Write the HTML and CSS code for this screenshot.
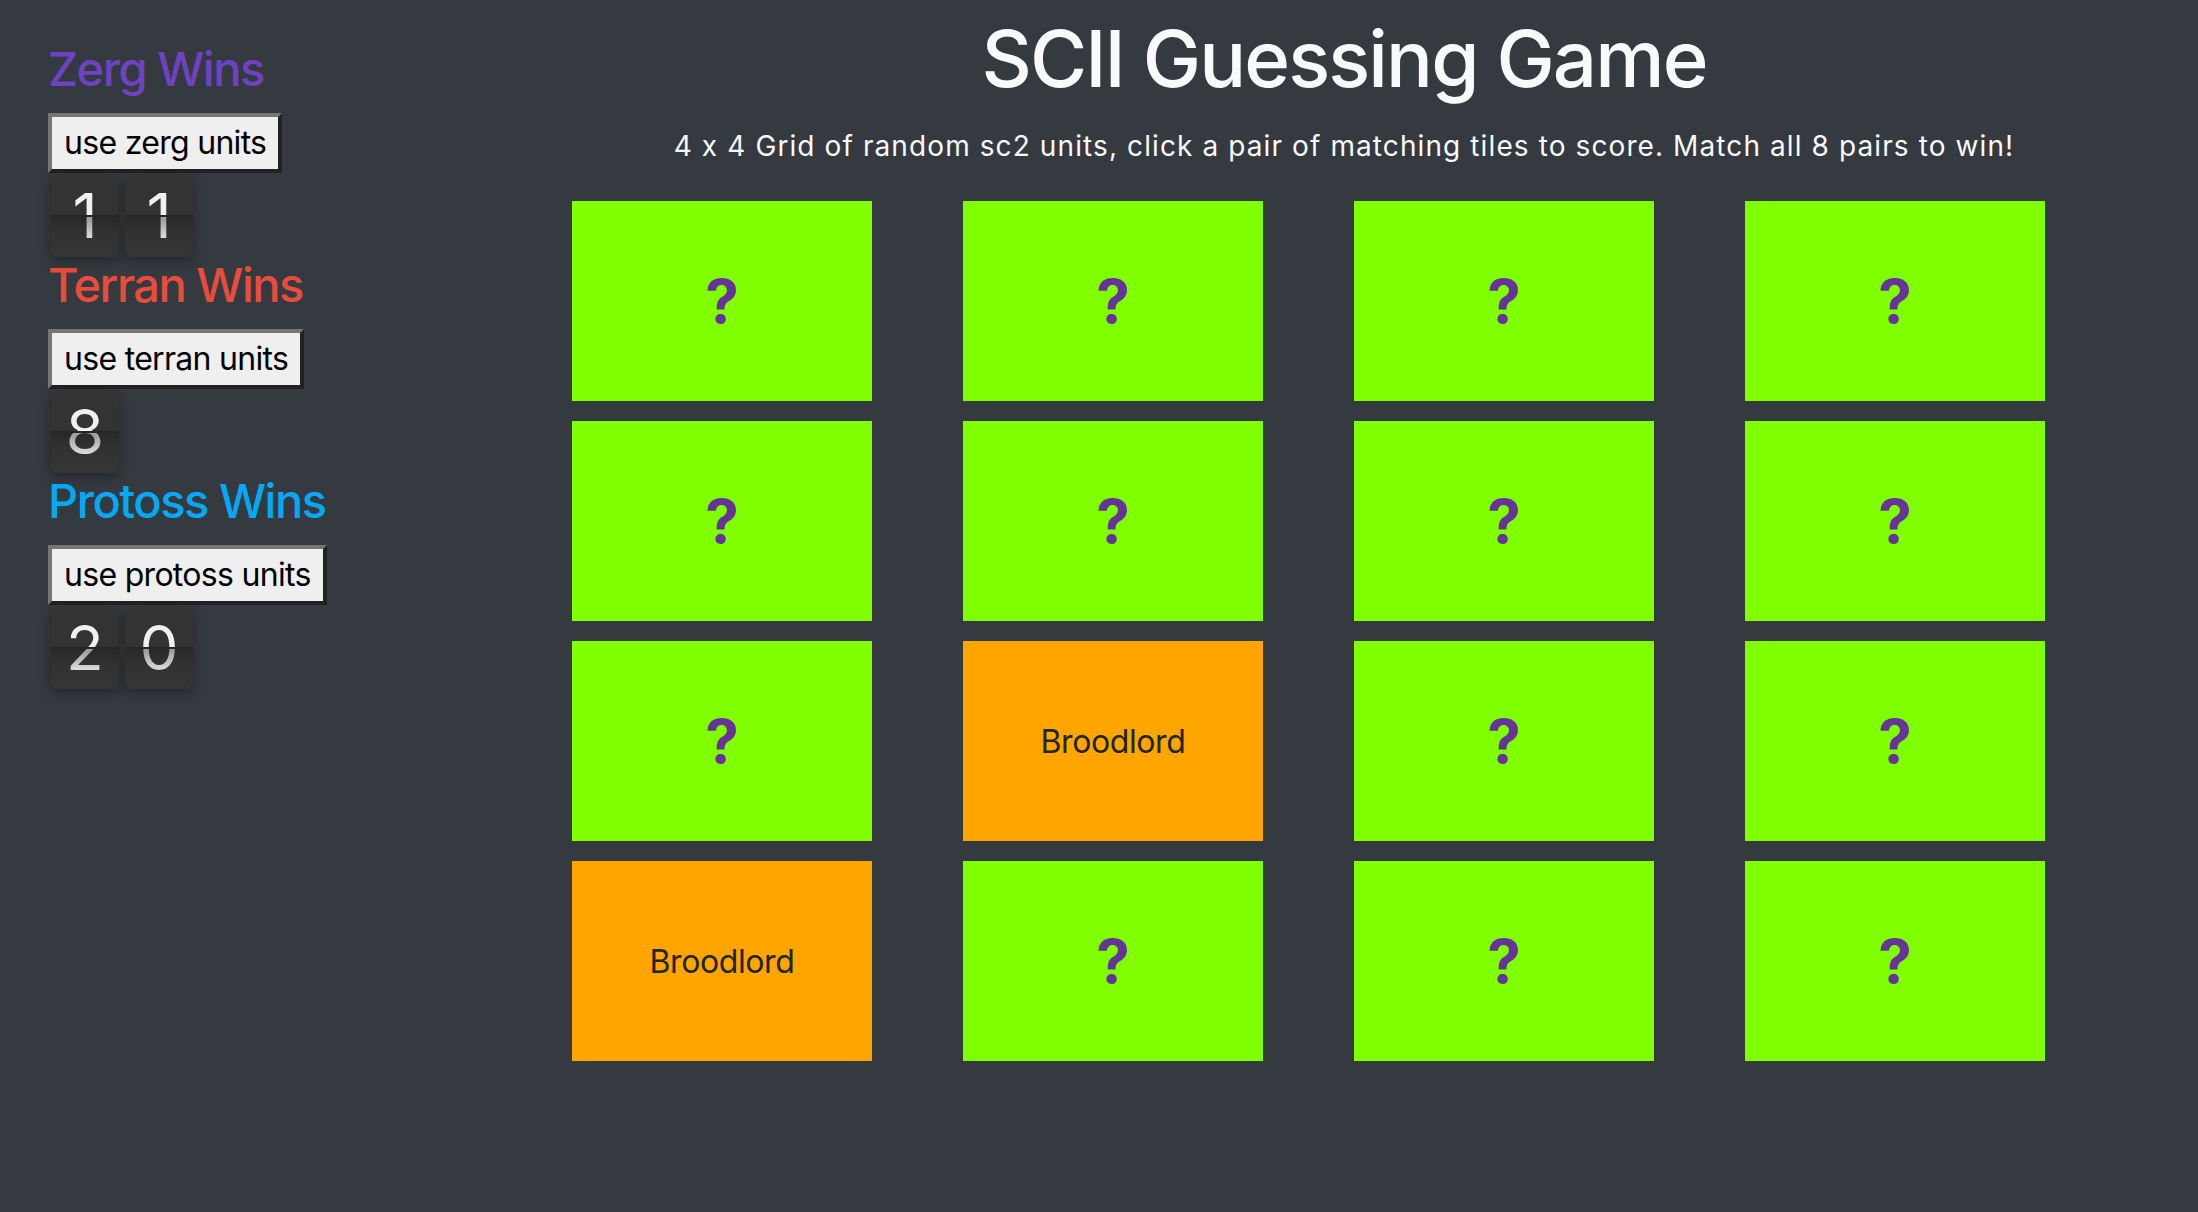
FILE: index.html
```html
<!DOCTYPE html>
<html lang="en">
<head>
<meta charset="utf-8">
<title>SCII Guessing Game</title>
<link rel="stylesheet" href="styles.css">
</head>
<body>
<div class="app">
  <aside class="sidebar">
    <section class="race">
      <h2 class="race-title zerg">Zerg Wins</h2>
      <button class="race-btn" type="button">use zerg units</button>
      <div class="counter"><span class="digit"><span class="num">1</span></span><span class="digit"><span class="num">1</span></span></div>
    </section>
    <section class="race">
      <h2 class="race-title terran">Terran Wins</h2>
      <button class="race-btn" type="button">use terran units</button>
      <div class="counter"><span class="digit"><span class="num">8</span></span></div>
    </section>
    <section class="race">
      <h2 class="race-title protoss">Protoss Wins</h2>
      <button class="race-btn" type="button">use protoss units</button>
      <div class="counter"><span class="digit"><span class="num">2</span></span><span class="digit"><span class="num">0</span></span></div>
    </section>
  </aside>
  <main class="main">
    <h1 class="title">SCII Guessing Game</h1>
    <p class="subtitle">4 x 4 Grid of random sc2 units, click a pair of matching tiles to score. Match all 8 pairs to win!</p>
    <div class="grid">
      <div class="tile hidden">?</div>
      <div class="tile hidden">?</div>
      <div class="tile hidden">?</div>
      <div class="tile hidden">?</div>
      <div class="tile hidden">?</div>
      <div class="tile hidden">?</div>
      <div class="tile hidden">?</div>
      <div class="tile hidden">?</div>
      <div class="tile hidden">?</div>
      <div class="tile shown">Broodlord</div>
      <div class="tile hidden">?</div>
      <div class="tile hidden">?</div>
      <div class="tile shown">Broodlord</div>
      <div class="tile hidden">?</div>
      <div class="tile hidden">?</div>
      <div class="tile hidden">?</div>
    </div>
  </main>
</div>
</body>
</html>
```
FILE: styles.css
```css
html, body {
  margin: 0;
  padding: 0;
}
body {
  background: #343a40;
  font-family: Inter, "Noto Sans", "Liberation Sans", sans-serif;
  font-feature-settings: "calt" 0;
  color: #f8f9fa;
  min-height: 1212px;
}
.app {
  display: flex;
  align-items: flex-start;
}
.sidebar {
  width: 442px;
  padding: 41px 0 0 48px;
  flex: none;
}
.race {
  display: flex;
  flex-direction: column;
  align-items: flex-start;
}
.race-title {
  margin: 0;
  font-size: 47px;
  line-height: 56px;
  font-weight: 500;
  letter-spacing: -1.5px;
}
.zerg { color: #6f42c1; }
.terran { color: #e74c3c; }
.protoss { color: #03a9f4; }
.race-btn {
  margin-top: 16px;
  font-family: inherit;
  font-feature-settings: "calt" 0;
  font-size: 32px;
  line-height: 40px;
  letter-spacing: -0.7px;
  padding: 6px 12px;
  color: #000;
  background: #efefef;
  border-width: 4px;
  border-style: solid;
  border-color: #767676 #222 #222 #767676;
  border-radius: 0;
}
.counter {
  display: flex;
  gap: 6px;
  margin-top: 2px;
  margin-left: 3px;
}
.digit {
  position: relative;
  width: 68px;
  height: 82px;
  border-radius: 8px;
  background: linear-gradient(#333 0%, #333 50%, #282828 50%, #323232 70%, #353535 100%);
  box-shadow: 0 4px 12px rgba(0, 0, 0, 0.35);
  display: flex;
  justify-content: center;
}
.digit::after {
  content: "";
  position: absolute;
  left: 0;
  right: 0;
  top: 40px;
  height: 2px;
  background: #262626;
}
.num {
  font-size: 62px;
  line-height: 82px;
  font-weight: 400;
  color: transparent;
  background: linear-gradient(#f0f0f0 0%, #f0f0f0 50%, #9a9a9a 52%, #d8d8d8 75%, #f4f4f4 100%);
  -webkit-background-clip: text;
  background-clip: text;
}
.main {
  flex: 1;
  text-align: center;
}
.title {
  margin: 12px 0 0;
  font-size: 78px;
  line-height: 94px;
  font-weight: 500;
  letter-spacing: -1.9px;
  color: #f8f9fa;
}
.subtitle {
  margin: 23px 0 0;
  font-size: 28px;
  line-height: 34px;
  letter-spacing: 1.1px;
  color: #f8f9fa;
}
.grid {
  margin: 38px 0 0 82px;
  display: grid;
  grid-template-columns: repeat(4, 300px);
  grid-auto-rows: 200px;
  column-gap: 91px;
  row-gap: 20px;
}
.tile {
  display: flex;
  align-items: center;
  justify-content: center;
}
.hidden {
  background: #80ff00;
  color: #663399;
  font-size: 60px;
  font-weight: 700;
}
.shown {
  background: #ffa500;
  color: #212529;
  font-size: 32px;
  font-weight: 400;
  letter-spacing: -0.4px;
}
```
